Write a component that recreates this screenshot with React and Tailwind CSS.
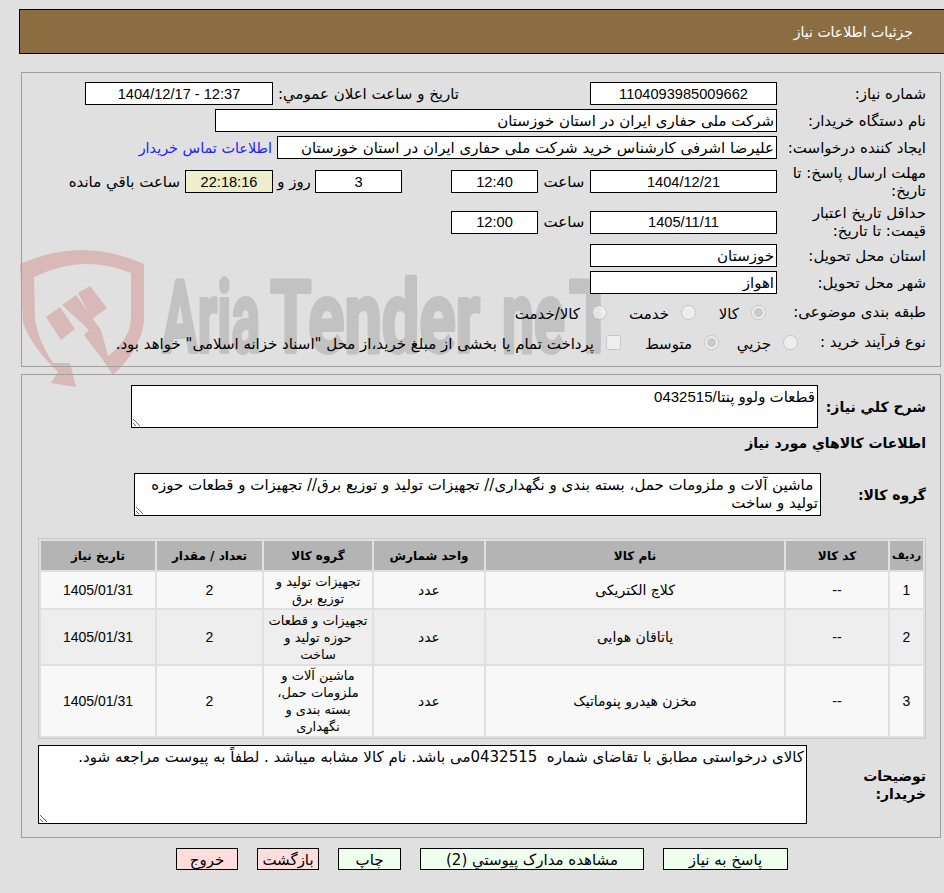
import React from "react";

const digits = "font-['Liberation_Sans','DejaVu_Sans',sans-serif]";
const inputBox = "h-[23px] border border-black px-[2px] text-black outline-none";
const areaBox = "border border-black bg-white px-[2px] py-[2px] text-[15px] leading-[18px] text-black outline-none";

const Field = ({ className = "", center, ...rest }) => (
  <input
    readOnly
    className={`${inputBox} bg-white ${center ? `text-center text-[14.6px] ${digits}` : "text-right text-[15px]"} ${className}`}
    {...rest}
  />
);

const rows = [
  { id: 1, name: "کلاچ الکتریکی", group: "تجهیزات تولید و توزیع برق", bg: "bg-[#f8f8f8]", h: "h-[36px]" },
  { id: 2, name: "یاتاقان هوایی", group: "تجهیزات و قطعات حوزه تولید و ساخت", bg: "bg-[#eeeeee]", h: "h-[54px]" },
  { id: 3, name: "مخزن هیدرو پنوماتیک", group: "ماشین آلات و ملزومات حمل، بسته بندی و نگهداری", bg: "bg-[#f8f8f8]", h: "h-[70px]" },
];

// Site watermark, sits behind the panels
const Watermark = () => (
  <svg className="absolute left-0 top-0 [direction:ltr]" width="944" height="893" viewBox="0 0 944 893">
    <g fill="#d9b8b8">
      <path d="M20 264 Q82 236 144 264 L144 322 Q140 350 113 375 L103 360 Q131 340 131 318 L131 273 Q82 253 34 277 L35 320 Q38 340 53 363 L70 363 L76 387 L51 383 L58 372 Q30 345 23 322 Z" />
      <path d="M46 317 L60 307 L75 329 L61 340 Z" />
      <path d="M62 305 L76 295 L101 330 L113 375 L103 360 L84 335 L89 330 Z" />
      <path d="M78 293 L90 286 L107 308 L92 319 Z" />
    </g>
    <g fill="#c2c2c2" stroke="#c2c2c2" strokeWidth="4" strokeLinejoin="round" direction="ltr" fontFamily="Roboto, sans-serif" fontWeight="700" fontSize="100">
      <text x="162" y="352" textLength="98" lengthAdjust="spacingAndGlyphs">Aria</text>
      <text x="270" y="352" textLength="210" lengthAdjust="spacingAndGlyphs">Tender</text>
      <text x="502" y="352" textLength="63" lengthAdjust="spacingAndGlyphs">ne</text>
      <text x="569" y="352" textLength="49" lengthAdjust="spacingAndGlyphs">T</text>
    </g>
  </svg>
);

const App = () => {
  return (
    <div dir="rtl" className="relative h-[893px] w-[944px] overflow-hidden bg-[#e0e0e0] font-['DejaVu_Sans',sans-serif] text-[15px] leading-[18px] text-black">
      <Watermark />

      <div className="relative">
        {/* Header */}
        <div className="mt-[9px] ml-[19px] flex h-[45px] items-center border-y border-l border-black bg-[#8c6d42] pr-[31px] text-[14px] text-white">
          جزئیات اطلاعات نیاز
        </div>

        {/* Need details */}
        <div className="mr-[3px] mt-[18px] flex h-[295px] w-[920px] flex-col gap-[4px] border border-[#a0a0a0] pr-[14px] pt-[9px]">
          <div className="flex h-[23px] items-center">
            <div className="w-[149px] pl-[5px]">شماره نیاز:</div>
            <Field center className="w-[187px]" value="1104093985009662" />
            <div className="mr-[131px] w-[186px]">تاریخ و ساعت اعلان عمومي:</div>
            <Field center dir="ltr" className="w-[188px]" value="1404/12/17 - 12:37" />
          </div>
          <div className="flex h-[23px] items-center">
            <div className="w-[149px] pl-[5px]">نام دستگاه خریدار:</div>
            <Field className="w-[562px]" value="شرکت ملی حفاری ایران در استان خوزستان" />
          </div>
          <div className="flex h-[23px] items-center">
            <div className="w-[149px] pl-[5px]">ایجاد کننده درخواست:</div>
            <Field className="w-[500px]" value="علیرضا اشرفی کارشناس خرید شرکت ملی حفاری ایران در استان خوزستان" />
            <a className="mr-[5px] text-[14.4px] text-[#2222ff]" href="#">اطلاعات تماس خریدار</a>
          </div>
          <div className="flex h-[37px] items-center">
            <div className="w-[149px] pl-[5px]">مهلت ارسال پاسخ: تا تاریخ:</div>
            <Field center className="w-[187px]" value="1404/12/21" />
            <div className="w-[52px] text-center">ساعت</div>
            <Field center className="w-[87px]" value="12:40" />
            <div className="w-[49px]" />
            <Field center className="w-[87px]" value="3" />
            <div className="w-[42px] text-center">روز و</div>
            <input readOnly value="22:18:16" className={`${inputBox} w-[88px] bg-[#eeeecd] text-center text-[14.6px] ${digits}`} />
            <div className="mr-[5px]">ساعت باقي مانده</div>
          </div>
          <div className="flex h-[36px] items-center">
            <div className="w-[149px] pl-[5px]">حداقل تاریخ اعتبار قیمت: تا تاریخ:</div>
            <Field center className="w-[187px]" value="1405/11/11" />
            <div className="w-[52px] text-center">ساعت</div>
            <Field center className="w-[87px]" value="12:00" />
          </div>
          <div className="flex h-[23px] items-center">
            <div className="w-[149px] pl-[5px]">استان محل تحویل:</div>
            <Field className="w-[187px]" value="خوزستان" />
          </div>
          <div className="flex h-[23px] items-center">
            <div className="w-[149px] pl-[5px]">شهر محل تحویل:</div>
            <Field className="w-[187px]" value="اهواز" />
          </div>
          <div className="flex h-[28px] items-center">
            <div className="w-[149px] pl-[5px]">طبقه بندی موضوعی:</div>
            <label className="flex w-[81px] items-center gap-3 pr-[11px]">
              <input type="radio" disabled defaultChecked name="category" className="m-0 h-[15px] w-[15px]" />
              <span className="pt-[4px]">کالا</span>
            </label>
            <label className="flex w-[89px] items-center gap-3">
              <input type="radio" disabled name="category" className="m-0 h-[15px] w-[15px]" />
              <span className="pt-[4px]">خدمت</span>
            </label>
            <label className="flex items-center gap-3">
              <input type="radio" disabled name="category" className="m-0 h-[15px] w-[15px]" />
              <span className="pt-[4px]">کالا/خدمت</span>
            </label>
          </div>
          <div className="flex h-[24px] items-center">
            <div className="w-[128px]">نوع فرآیند خرید :</div>
            <label className="flex w-[79px] items-center gap-3">
              <input type="radio" disabled name="process" className="m-0 h-[15px] w-[15px]" />
              <span className="pt-[4px]">جزيي</span>
            </label>
            <label className="flex w-[98px] items-center gap-3">
              <input type="radio" disabled defaultChecked name="process" className="m-0 h-[15px] w-[15px]" />
              <span className="pt-[4px]">متوسط</span>
            </label>
            <label className="flex items-center gap-3">
              <input type="checkbox" disabled className="m-0 h-[15px] w-[15px]" />
              <span className="pt-[4px]">پرداخت تمام یا بخشی از مبلغ خرید،از محل "اسناد خزانه اسلامی" خواهد بود.</span>
            </label>
          </div>
        </div>

        {/* Goods */}
        <div className="mr-[3px] mt-[7px] h-[464px] w-[920px] border border-[#a0a0a0] pr-[14px] pt-[10px]">
          <div className="flex items-center">
            <div className="w-[108px] text-[14px] font-bold">شرح كلي نياز:</div>
            <textarea readOnly className={`${areaBox} ${digits} h-[43px] w-[687px]`} value="قطعات ولوو پنتا/0432515" />
          </div>
          <div className="mt-[6px] flex h-[18px] items-center text-[14px] font-bold">اطلاعات كالاهاي مورد نياز</div>
          <div className="mt-[21px] flex items-center">
            <div className="w-[105px] text-[14px] font-bold">گروه کالا:</div>
            <textarea
              readOnly
              className={`${areaBox} h-[43px] w-[687px]`}
              value=" ماشین آلات و ملزومات حمل، بسته بندی و نگهداری// تجهیزات تولید و توزیع برق// تجهیزات و قطعات حوزه تولید و ساخت"
            />
          </div>

          <table className="mt-[22px] w-[888px] table-fixed border-separate border-spacing-[2px] border border-[#c8c8c8] text-center text-[14px]">
            <thead>
              <tr className="h-[29px] bg-[#b4b4b4] text-[12px] font-bold">
                <th className="w-[33px] p-0 text-[11px]">ردیف</th>
                <th className="w-[102px] p-0">کد کالا</th>
                <th className="w-[298px] p-0">نام کالا</th>
                <th className="w-[110px] p-0">واحد شمارش</th>
                <th className="w-[108px] p-0">گروه کالا</th>
                <th className="w-[105px] p-0">تعداد / مقدار</th>
                <th className="p-0">تاریخ نیاز</th>
              </tr>
            </thead>
            <tbody>
              {rows.map((r) => (
                <tr key={r.id} className={`${r.bg} ${r.h}`}>
                  <td className={`p-0 ${digits}`}>{r.id}</td>
                  <td className={`p-0 ${digits}`}>--</td>
                  <td className="p-0">{r.name}</td>
                  <td className="p-0">عدد</td>
                  <td className="px-[4px] py-0 text-[13px] leading-[17px]">{r.group}</td>
                  <td className={`p-0 ${digits}`}>2</td>
                  <td className={`p-0 ${digits}`}>1405/01/31</td>
                </tr>
              ))}
            </tbody>
          </table>

          <div className="mt-[6px] flex items-center">
            <div className="w-[119px] text-[14px] font-bold">توضیحات<br />خریدار:</div>
            <textarea
              readOnly
              className={`${areaBox} h-[79px] w-[769px]`}
              value="کالای درخواستی مطابق با تقاضای شماره  0432515می باشد. نام کالا مشابه میباشد . لطفاً به پیوست مراجعه شود."
            />
          </div>
        </div>

        {/* Actions */}
        <div className="mt-[10px] flex gap-[19px] pr-[156px]">
          <button className="h-[22px] w-[125px] border border-black bg-[#eeffee] pt-[2px]">پاسخ به نیاز</button>
          <button className="h-[22px] w-[224px] border border-black bg-[#eeffee] pt-[2px]">مشاهده مدارک پیوستي (2)</button>
          <button className="h-[22px] w-[63px] border border-black bg-[#eeffee] pt-[2px]">چاپ</button>
          <button className="h-[22px] w-[62px] border border-black bg-[#ffdddd] pt-[2px]">بازگشت</button>
          <button className="h-[22px] w-[62px] border border-black bg-[#ffdddd] pt-[2px]">خروج</button>
        </div>
      </div>
    </div>
  );
};

export default App;
